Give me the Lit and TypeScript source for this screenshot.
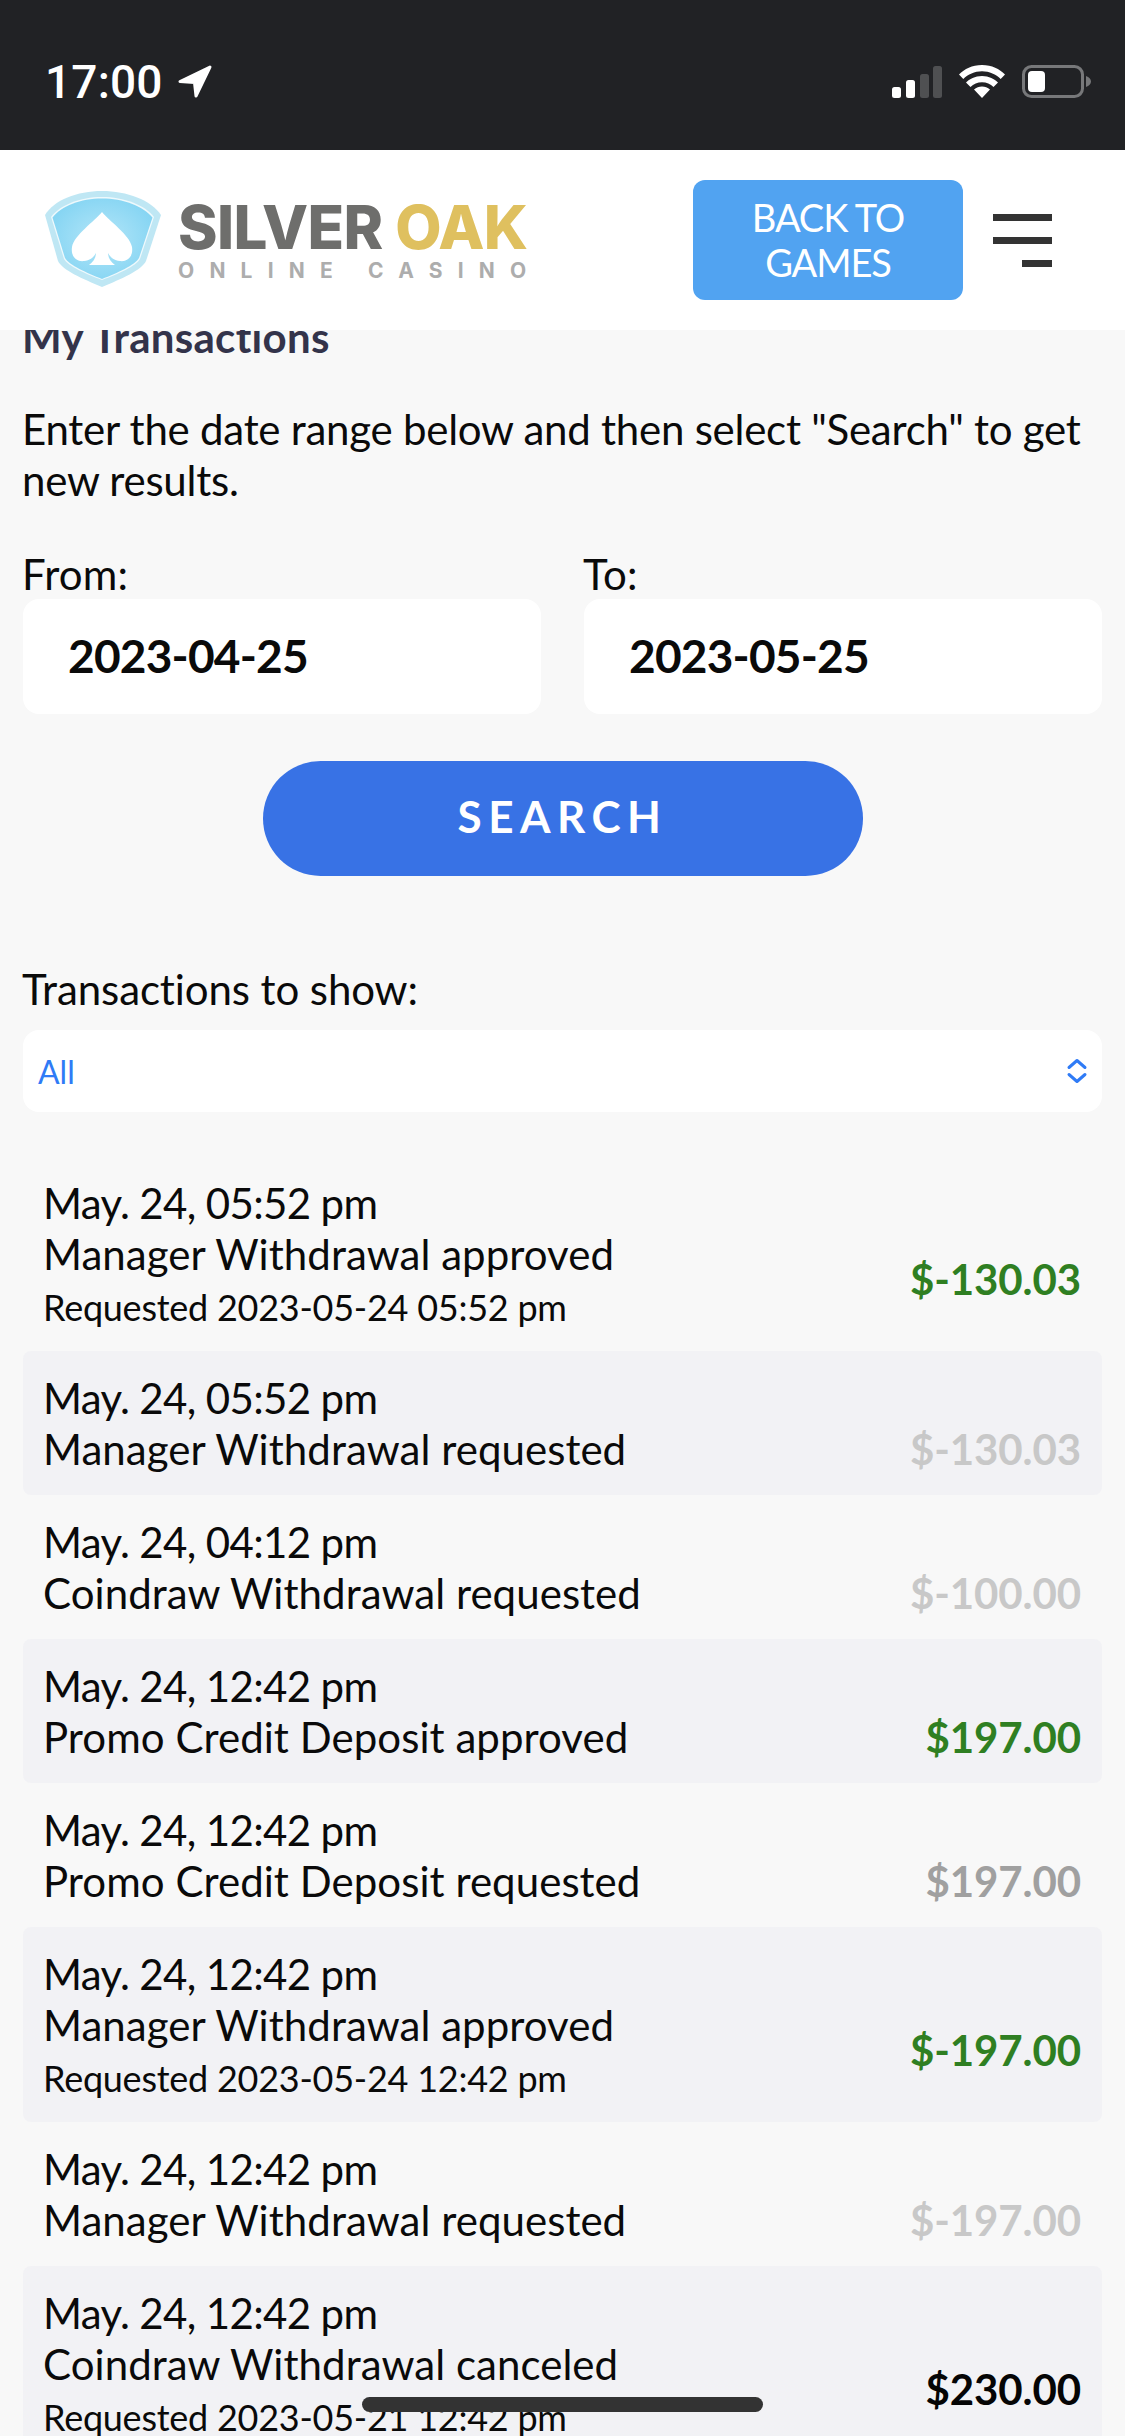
import { LitElement, html, css, svg } from "lit";
import { customElement } from "lit/decorators.js";

type Tone = "green" | "light" | "mid" | "black";
interface Row { date: string; title: string; note?: string; amount: string; tone: Tone; }

const ROWS: Row[] = [
  { date: "May. 24, 05:52 pm", title: "Manager Withdrawal approved", note: "Requested 2023-05-24 05:52 pm", amount: "$-130.03", tone: "green" },
  { date: "May. 24, 05:52 pm", title: "Manager Withdrawal requested", amount: "$-130.03", tone: "light" },
  { date: "May. 24, 04:12 pm", title: "Coindraw Withdrawal requested", amount: "$-100.00", tone: "light" },
  { date: "May. 24, 12:42 pm", title: "Promo Credit Deposit approved", amount: "$197.00", tone: "green" },
  { date: "May. 24, 12:42 pm", title: "Promo Credit Deposit requested", amount: "$197.00", tone: "mid" },
  { date: "May. 24, 12:42 pm", title: "Manager Withdrawal approved", note: "Requested 2023-05-24 12:42 pm", amount: "$-197.00", tone: "green" },
  { date: "May. 24, 12:42 pm", title: "Manager Withdrawal requested", amount: "$-197.00", tone: "light" },
  { date: "May. 24, 12:42 pm", title: "Coindraw Withdrawal canceled", note: "Requested 2023-05-21 12:42 pm", amount: "$230.00", tone: "black" },
];

const shield = svg`
  <defs>
    <radialGradient id="sg" cx="50%" cy="50%" r="55%">
      <stop offset="0%" stop-color="#b4e6f8"/>
      <stop offset="100%" stop-color="#86d5f3"/>
    </radialGradient>
  </defs>
  <path d="M59 1C34 1 11 10 2 25L15 71C19 80 40 89 59 97C78 89 99 80 103 71L118 25C108 10 84 1 59 1Z" fill="#bfe7f4"/>
  <path d="M59 7C37 7 17 15 8 27L21 69C25 76 43 84 59 90C75 84 93 76 97 69L111 27C102 15 81 7 59 7Z" fill="#fff" fill-opacity=".75"/>
  <path d="M59 8.500C38 8.500 18 16 9.500 27.500L22 68C26 75 44 83 59 89C74 83 92 75 96 68L109.500 27.500C100 16 80 8.500 59 8.500Z" fill="url(#sg)"/>
  <path d="M59 22C52 31 31 45 29 57C27.500 67 34 72 41 71C47 70.500 51 67 53 63C53 68 50 72 46 75H72C68 72 65 68 65 63C67 67 71 70.500 77 71C84 72 90.500 67 89 57C87 45 66 31 59 22Z" fill="#fff"/>
`;

@customElement("app-root")
export class AppRoot extends LitElement {
  static styles = css`
    :host { display: block; width: 1125px; height: 2436px; position: relative; overflow: hidden; background: #f8f8f8; font-family: Lato, "Liberation Sans", sans-serif; color: #0a0a0a; }
    .status { height: 150px; background: #212225; display: flex; align-items: center; box-sizing: border-box; padding: 13px 34px 0 45px; color: #fff; }
    .time { font: 500 46px/1 Roboto, sans-serif; margin-right: 14px; letter-spacing: 0.2px; }
    .status svg { display: block; }
    .spacer { flex: 1; }
    .sicons { display: flex; align-items: center; gap: 17px; }
    .header { height: 180px; background: #fff; display: flex; align-items: flex-start; box-sizing: border-box; padding: 30px 73px 0 43px; }
    .logo { display: flex; margin-top: 10px; gap: 15px; }
    .shield { display: block; width: 120px; height: 100px; }
    .brand { display: flex; flex-direction: column; margin-top: 12px; width: 350px; }
    .brand-top { font: 800 60px/50px Inter, sans-serif; color: #6e6e6c; letter-spacing: -0.6px; white-space: nowrap; }
    .brand-top span { color: #dfc05f; }
    .brand-sub { font: 700 21px/24px Inter, sans-serif; color: #adadad; letter-spacing: 15.2px; white-space: nowrap; margin-top: 7px; }
    .back { margin-left: auto; width: 270px; height: 120px; border-radius: 12px; background: #51a3f1; color: #fff; display: flex; align-items: center; justify-content: center; text-align: center; font-size: 38px; line-height: 45px; font-weight: 400; letter-spacing: -1.1px; }
    .burger { margin-left: 30px; width: 59px; display: flex; flex-direction: column; align-items: flex-end; gap: 16px; padding-top: 34px; }
    .burger i { display: block; height: 7px; background: #333; width: 100%; }
    .burger i:last-child { width: 30px; }
    main { height: 2106px; overflow: hidden; padding: 0 23px; box-sizing: border-box; font-size: 42px; line-height: 51px; letter-spacing: -0.25px; }
    h1 { margin: -18px 0 0 -1px; font-size: 42px; line-height: 51px; font-weight: 700; color: #33334a; letter-spacing: 0.3px; }
    p { margin: 41px 0 0 -1px; }
    .fields { display: flex; gap: 43px; margin-top: 42px; }
    .field { flex: 1; }
    .label { margin-left: -1px; margin-top: 1px; height: 50px; letter-spacing: 0.2px; }
    .input { height: 115px; box-sizing: border-box; padding: 0 0 3px 45px; border-radius: 16px; background: #fff; display: flex; align-items: center; font-size: 46px; font-weight: 700; letter-spacing: -0.8px; color: #0a0a0a; }
    .search { display: flex; align-items: center; justify-content: center; box-sizing: border-box; padding-bottom: 5px; width: 600px; height: 115px; margin: 47px auto 0; border-radius: 58px; background: #3872e5; color: #fff; font-size: 44px; font-weight: 700; letter-spacing: 6.5px; }
    .show { margin: 88px 0 0 -1px; letter-spacing: -0.1px; }
    .select { margin-top: 15px; height: 82px; border-radius: 16px; background: #fff; display: flex; align-items: center; justify-content: space-between; padding: 0 14px 0 15px; color: #2f7bf6; font-size: 32px; letter-spacing: 0; }
    .select svg { display: block; }
    .list { margin-top: 44px; }
    .row { display: flex; align-items: center; justify-content: space-between; padding: 22px 21px 20px 20px; border-radius: 8px; }
    .row:nth-child(even) { background: #f2f2f5; }
    .date { letter-spacing: -0.65px; }
    .title { letter-spacing: 0.05px; }
    .note { font-size: 36px; letter-spacing: -0.25px; padding-top: 3px; line-height: 48px; }
    .amt { margin-top: 50px; font-size: 42px; font-weight: 700; letter-spacing: -0.1px; }
    .green { color: #2f7f22; }
    .light { color: #c8c8c8; }
    .mid { color: #a0a0a0; }
    .black { color: #050505; }
    .home { position: absolute; left: 362px; top: 2397px; width: 401px; height: 15px; border-radius: 8px; background: #333; }
  `;

  render() {
    return html`
      <div class="status">
        <span class="time">17:00</span>
        <svg width="36" height="34" viewBox="0 0 36 34"><path d="M33 2L3 16.500L17.500 17.500L19 31Z" fill="#fff" stroke="#fff" stroke-width="3" stroke-linejoin="round"/></svg>
        <span class="spacer"></span>
        <div class="sicons">
          <svg width="50" height="32" viewBox="0 0 50 32">
            <rect x="0" y="21" width="9" height="11" rx="2.500" fill="#fff"/>
            <rect x="14" y="14" width="9" height="18" rx="2.500" fill="#fff"/>
            <rect x="28" y="8" width="9" height="24" rx="2.500" fill="#4f5052"/>
            <rect x="41" y="0" width="9" height="32" rx="2.500" fill="#4f5052"/>
          </svg>
          <svg width="46" height="33" viewBox="0 0 46 33">
            <path d="M23 33L15 24.500C19.500 20.500 26.500 20.500 31 24.500Z M23 11C30 11 35.500 14 39 17.500L34.500 22C31.500 19 27.500 17.300 23 17.300C18.500 17.300 14.500 19 11.500 22L7 17.500C10.500 14 16 11 23 11Z M23 0C33 0 40.500 4 46 9.500L41.700 14C37 9.300 30.500 6.200 23 6.200C15.500 6.200 9 9.300 4.300 14L0 9.500C5.500 4 13 0 23 0Z" fill="#fff"/>
          </svg>
          <svg width="69" height="33" viewBox="0 0 69 33">
            <rect x="1.500" y="1.500" width="59" height="30" rx="8" fill="none" stroke="#77787a" stroke-width="3"/>
            <rect x="6" y="6" width="17" height="21" rx="4" fill="#fff"/>
            <path d="M64 11C67 12 69 14 69 16.500C69 19 67 21 64 22Z" fill="#77787a"/>
          </svg>
        </div>
      </div>
      <div class="header">
        <div class="logo">
          <svg class="shield" viewBox="0 0 120 100">${shield}</svg>
          <div class="brand">
            <div class="brand-top">SILVER <span>OAK</span></div>
            <div class="brand-sub">ONLINE CASINO</div>
          </div>
        </div>
        <div class="back">BACK TO<br />GAMES</div>
        <div class="burger"><i></i><i></i><i></i></div>
      </div>
      <main>
        <h1>My Transactions</h1>
        <p>Enter the date range below and then select "Search" to get new results.</p>
        <div class="fields">
          <div class="field"><div class="label">From:</div><div class="input">2023-04-25</div></div>
          <div class="field"><div class="label">To:</div><div class="input">2023-05-25</div></div>
        </div>
        <div class="search">SEARCH</div>
        <div class="show">Transactions to show:</div>
        <div class="select">
          <span>All</span>
          <svg width="22" height="26" viewBox="0 0 22 26" fill="none" stroke="#2f7bf6" stroke-width="3" stroke-linecap="round" stroke-linejoin="round"><path d="M3 9.500L11 2.500L19 9.500M3 16.500L11 23.500L19 16.500"/></svg>
        </div>
        <div class="list">
          ${ROWS.map((r) => html`
            <div class="row">
              <div>
                <div class="date">${r.date}</div>
                <div class="title">${r.title}</div>
                ${r.note ? html`<div class="note">${r.note}</div>` : ""}
              </div>
              <div class="amt ${r.tone}">${r.amount}</div>
            </div>`)}
        </div>
      </main>
      <div class="home"></div>
    `;
  }
}
